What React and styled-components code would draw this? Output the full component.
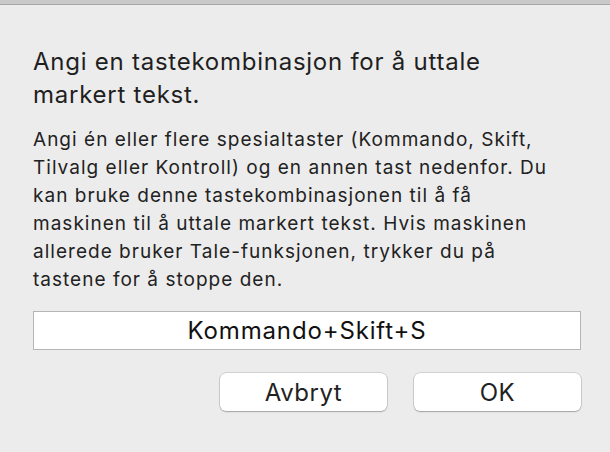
import React from 'react';
import styled, { createGlobalStyle } from 'styled-components';

const GlobalStyle = createGlobalStyle`
  html, body {
    margin: 0;
    padding: 0;
    background: #ececec;
  }
  body {
    font-family: "Inter", "Roboto", "Liberation Sans", sans-serif;
    -webkit-font-smoothing: antialiased;
  }
`;

const Sheet = styled.div`
  width: 610px;
  height: 452px;
  background: #ececec;
  display: flex;
  flex-direction: column;
  overflow: hidden;
`;

const TopEdge = styled.div`
  height: 4px;
  background: #c9c9c9;
  border-bottom: 1px solid #a6a6a6;
  flex-shrink: 0;
`;

const Content = styled.div`
  display: flex;
  flex-direction: column;
  padding: 0 29px 0 33px;
`;

const Title = styled.h1`
  margin: 41px 0 0;
  font-size: 24px;
  font-weight: 400;
  line-height: 32.5px;
  letter-spacing: 0.75px;
  color: #1f1f1f;
  white-space: nowrap;
`;

const Body = styled.p`
  margin: 15px 0 0;
  font-size: 19px;
  font-weight: 400;
  line-height: 28px;
  letter-spacing: 1.02px;
  color: #222222;
  white-space: nowrap;
`;

const Field = styled.div`
  box-sizing: border-box;
  margin-top: 17px;
  height: 39px;
  background: #ffffff;
  border: 1px solid #b5b5b5;
  display: flex;
  align-items: center;
  justify-content: center;
  font-size: 24px;
  letter-spacing: 0.85px;
  color: #111111;
`;

const Buttons = styled.div`
  display: flex;
  justify-content: flex-end;
  gap: 27px;
  margin-top: 23px;
`;

const Button = styled.button`
  width: 167px;
  height: 38px;
  border: none;
  border-radius: 6px;
  background: #ffffff;
  box-shadow: 0 0 0 0.5px rgba(0, 0, 0, 0.22), 0 1px 1.5px rgba(0, 0, 0, 0.22);
  font-family: inherit;
  font-size: 24px;
  letter-spacing: 0.5px;
  color: #222222;
  padding: 0;
`;

const bodyLines = [
  'Angi én eller flere spesialtaster (Kommando, Skift,',
  'Tilvalg eller Kontroll) og en annen tast nedenfor. Du',
  'kan bruke denne tastekombinasjonen til å få',
  'maskinen til å uttale markert tekst. Hvis maskinen',
  'allerede bruker Tale-funksjonen, trykker du på',
  'tastene for å stoppe den.',
];

export default function App() {
  return (
    <Sheet>
      <GlobalStyle />
      <TopEdge />
      <Content>
        <Title>
          Angi en tastekombinasjon for å uttale
          <br />
          markert tekst.
        </Title>
        <Body>
          {bodyLines.map((line, i) => (
            <React.Fragment key={i}>
              {line}
              {i < bodyLines.length - 1 && <br />}
            </React.Fragment>
          ))}
        </Body>
        <Field>Kommando+Skift+S</Field>
        <Buttons>
          <Button>Avbryt</Button>
          <Button>OK</Button>
        </Buttons>
      </Content>
    </Sheet>
  );
}
